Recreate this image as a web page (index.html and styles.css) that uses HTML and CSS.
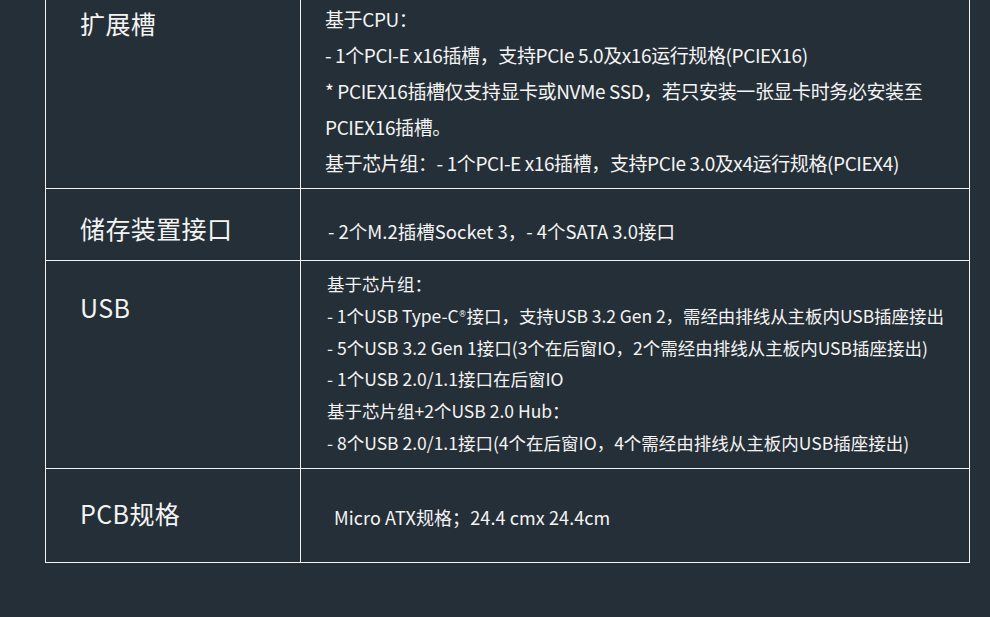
FILE: index.html
```html
<!DOCTYPE html>
<html lang="zh-CN">
<head>
<meta charset="utf-8">
<title>规格</title>
<link rel="stylesheet" href="styles.css">
</head>
<body>
<div class="spec">
  <div class="row row-slot">
    <div class="name">扩展槽</div>
    <div class="value">
      <div>基于CPU：</div>
      <div>- 1个PCI-E x16插槽，支持PCIe 5.0及x16运行规格(PCIEX16)</div>
      <div>* PCIEX16插槽仅支持显卡或NVMe SSD，若只安装一张显卡时务必安装至</div>
      <div>PCIEX16插槽。</div>
      <div>基于芯片组：- 1个PCI-E x16插槽，支持PCIe 3.0及x4运行规格(PCIEX4)</div>
    </div>
  </div>
  <div class="row row-storage">
    <div class="name">储存装置接口</div>
    <div class="value">- 2个M.2插槽Socket 3，- 4个SATA 3.0接口</div>
  </div>
  <div class="row row-usb">
    <div class="name">USB</div>
    <div class="value">
      <div>基于芯片组：</div>
      <div class="tight">- 1个USB Type-C<sup class="reg">®</sup>接口，支持USB 3.2 Gen 2，需经由排线从主板内USB插座接出</div>
      <div>- 5个USB 3.2 Gen 1接口(3个在后窗IO，2个需经由排线从主板内USB插座接出)</div>
      <div>- 1个USB 2.0/1.1接口在后窗IO</div>
      <div>基于芯片组+2个USB 2.0 Hub：</div>
      <div>- 8个USB 2.0/1.1接口(4个在后窗IO，4个需经由排线从主板内USB插座接出)</div>
    </div>
  </div>
  <div class="row row-pcb">
    <div class="name">PCB规格</div>
    <div class="value">Micro ATX规格；24.4 cmx 24.4cm</div>
  </div>
</div>
</body>
</html>
```

FILE: styles.css
```css
html, body {
  margin: 0;
  padding: 0;
  background: #242f37;
}

body {
  font-family: "Noto Sans CJK SC", "Noto Sans", sans-serif;
  color: #f4f4f4;
  height: 617px;
  overflow: hidden;
}

.spec {
  width: 923px;
  margin-left: 45px;
  border-left: 1px solid #f2f2f2;
  border-right: 1px solid #f2f2f2;
}

.row {
  display: grid;
  grid-template-columns: 255px 1fr;
  border-bottom: 1px solid #f2f2f2;
}

.name {
  border-right: 1px solid #f2f2f2;
  padding-left: 34px;
  font-size: 25px;
  line-height: 36px;
  letter-spacing: 0.4px;
}

.value {
  padding-left: 24px;
  font-size: 18px;
  white-space: nowrap;
}

.tight {
  letter-spacing: -0.06px;
}

.reg {
  font-family: "DejaVu Sans", sans-serif;
  font-size: 8px;
  line-height: 0;
  vertical-align: 6px;
  letter-spacing: 0;
}

/* row 1 */
.row-slot .name { padding-top: 5px; }
.row-slot .value {
  font-size: 19px;
  letter-spacing: -0.4px;
  line-height: 36px;
  padding-top: 1px;
  padding-bottom: 7px;
}

/* row 2 */
.row-storage .name { padding-top: 21px; padding-bottom: 14px; }
.row-storage .value {
  font-size: 18.5px;
  line-height: 36px;
  padding-top: 24px;
  padding-bottom: 11px;
  padding-left: 27px;
}

/* row 3 */
.row-usb .name { padding-top: 28px; }
.row-usb .value {
  font-size: 17.5px;
  line-height: 31.8px;
  padding-top: 7px;
  padding-bottom: 9px;
  padding-left: 26px;
}

/* row 4 */
.row-pcb .name { padding-top: 26px; padding-bottom: 31px; }
.row-pcb .value {
  letter-spacing: 0.1px;
  line-height: 36px;
  padding-top: 30px;
  padding-bottom: 27px;
  padding-left: 33px;
}
```
